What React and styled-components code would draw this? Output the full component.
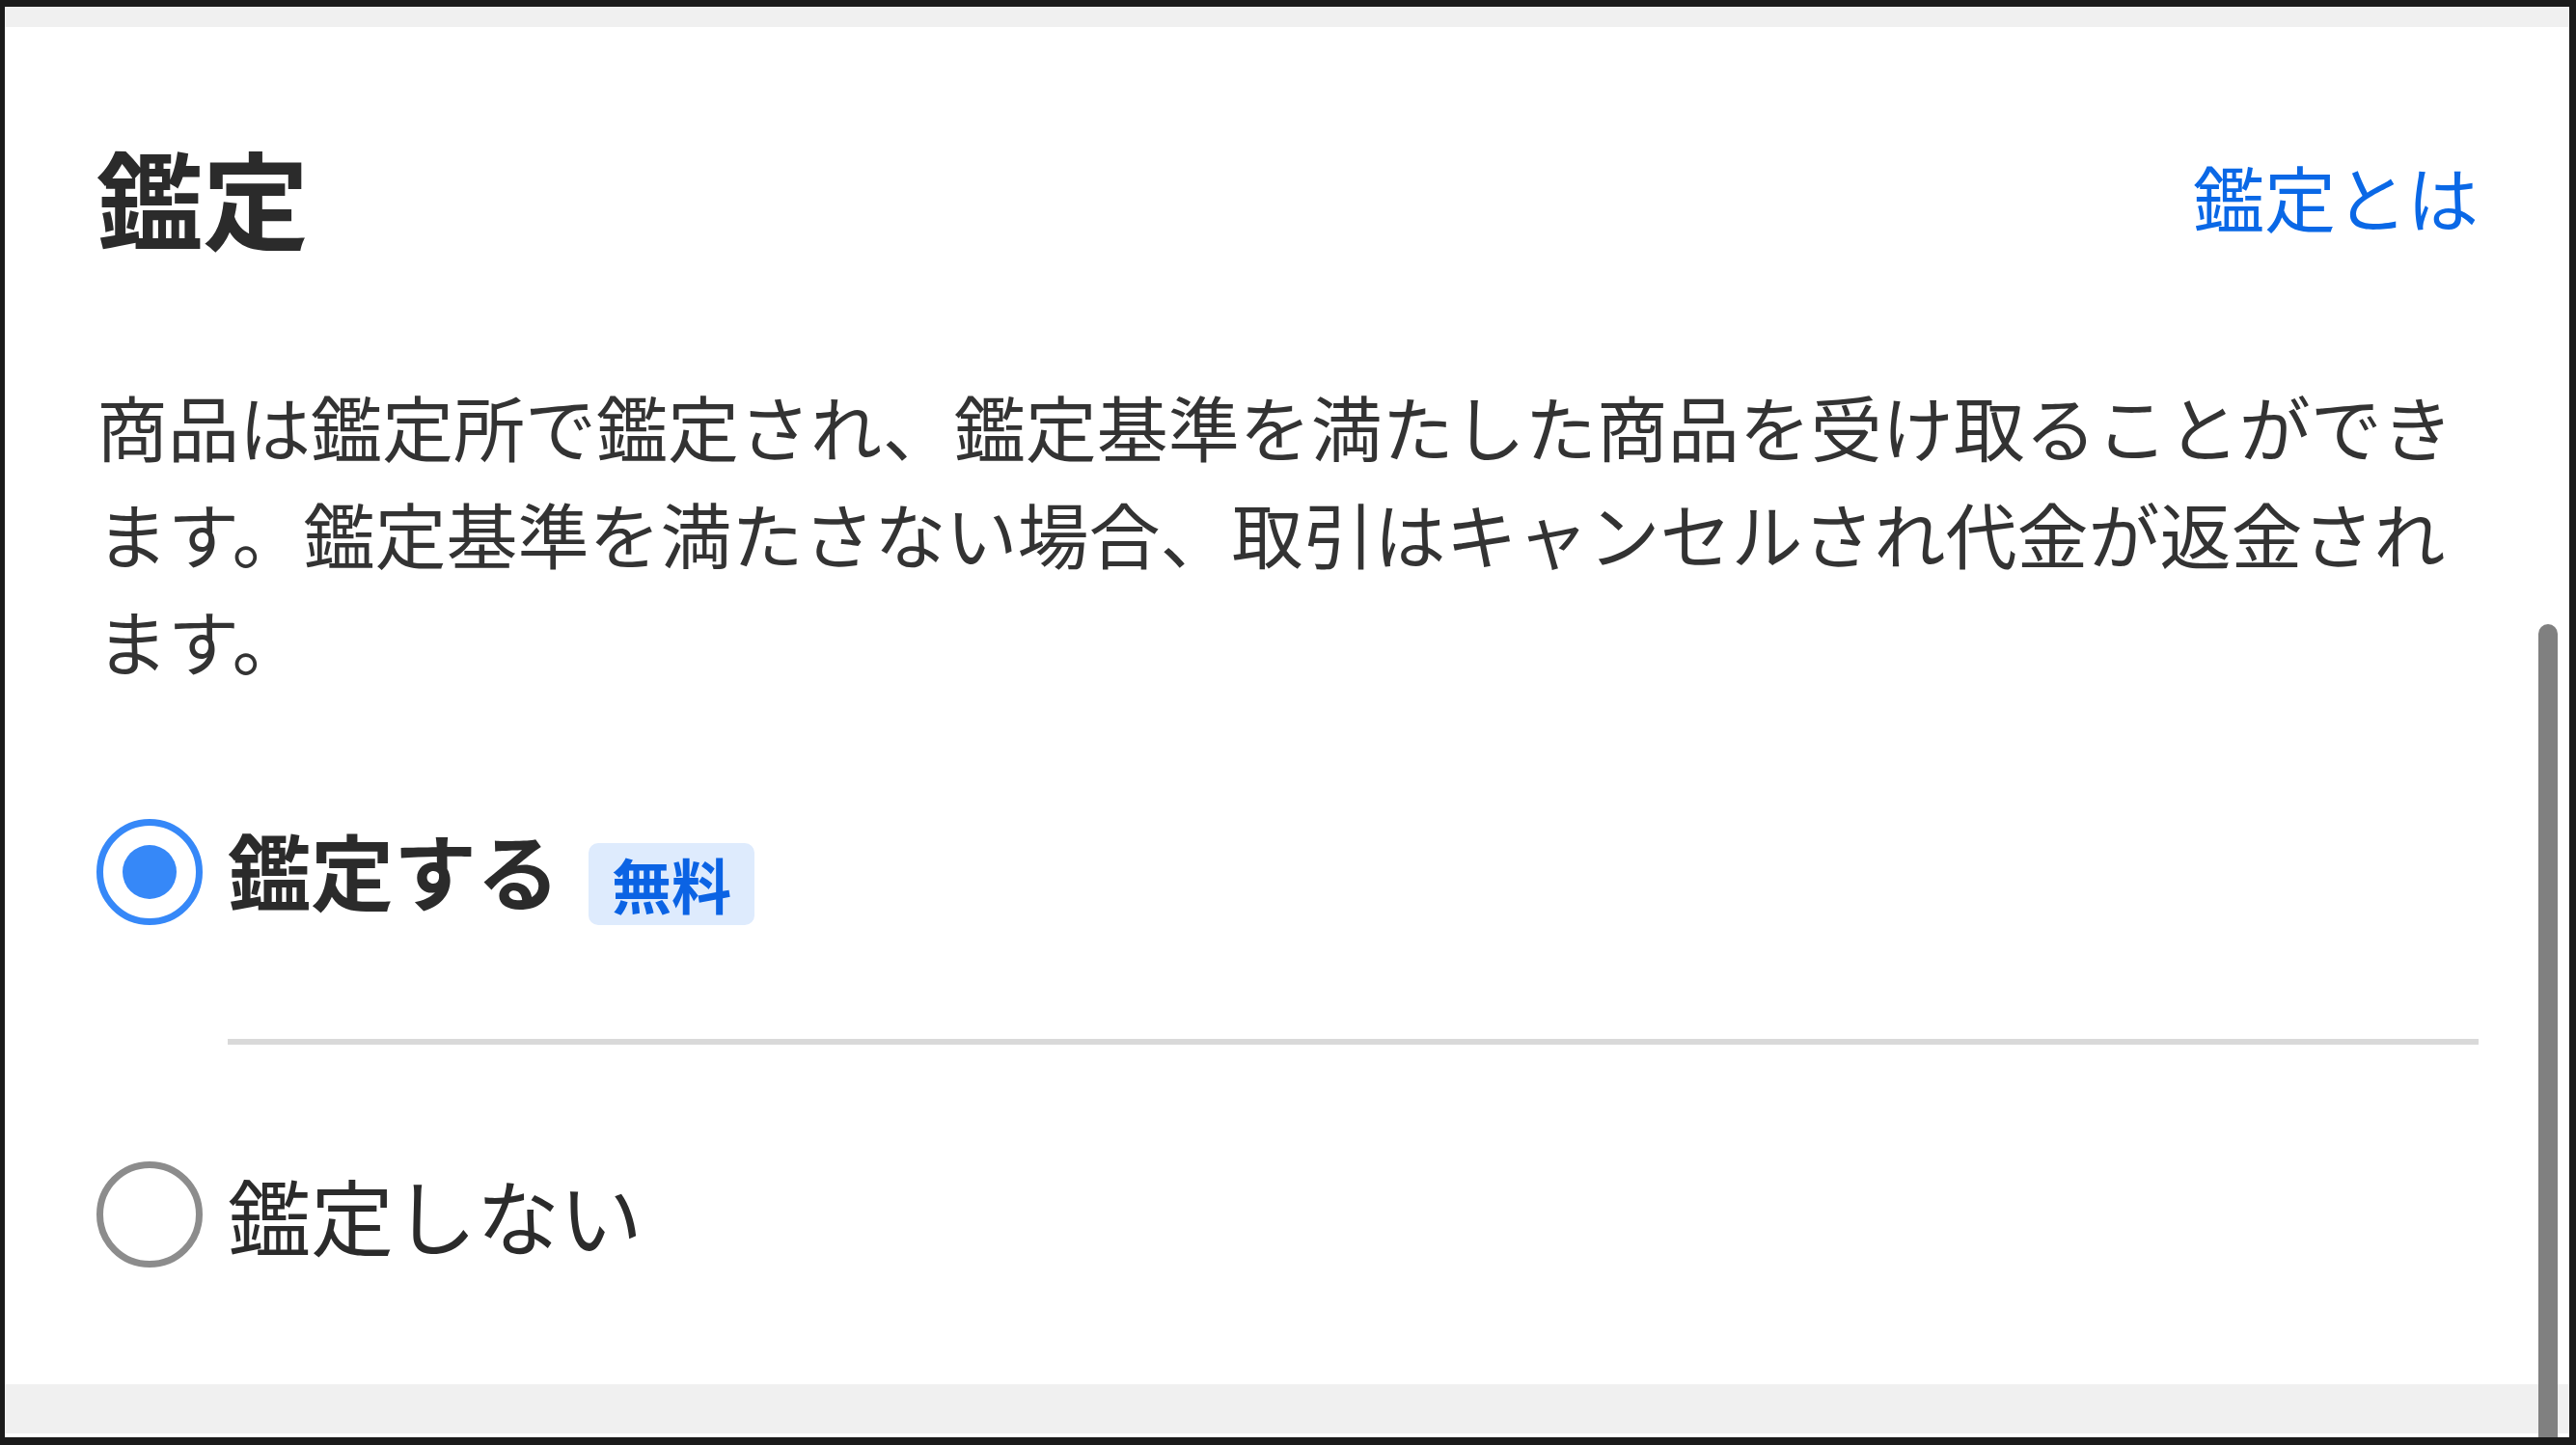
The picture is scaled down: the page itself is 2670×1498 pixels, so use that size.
import React, { useState } from 'react';
import styled, { createGlobalStyle } from 'styled-components';

const GlobalStyle = createGlobalStyle`
  html, body {
    margin: 0;
    padding: 0;
    background: #1b1b1b;
  }
  body {
    font-family: "Noto Sans CJK JP", "Noto Sans", sans-serif;
    color: #333333;
  }
`;

const Frame = styled.div`
  padding: 7px 7px 8px 5px;
  width: 2670px;
  height: 1498px;
  box-sizing: border-box;
`;

const Screen = styled.div`
  position: relative;
  height: 100%;
  display: flex;
  flex-direction: column;
  background: #ffffff;
  overflow: hidden;
`;

const GrayBand = styled.div`
  height: ${(p) => p.$h}px;
  background: #f0f0f0;
  flex-shrink: 0;
`;

const Section = styled.section`
  padding: 98px 94px 0 95px;
`;

const Header = styled.div`
  display: flex;
  justify-content: space-between;
  align-items: center;
  height: 154px;
`;

const Title = styled.h2`
  margin: 0;
  font-size: 110px;
  font-weight: 700;
  color: #2b2b2b;
  line-height: 1.4;
`;

const HelpLink = styled.a`
  font-size: 74px;
  color: #0a68e6;
  text-decoration: none;
  line-height: 1.4;
  cursor: pointer;
`;

const Description = styled.p`
  margin: 105px 0 0;
  font-size: 74px;
  line-height: 111px;
  color: #333333;
  padding-right: 6px;
`;

const Options = styled.div`
  display: flex;
  flex-direction: column;
  margin-top: 7px;
`;

const OptionRow = styled.label`
  display: flex;
  align-items: center;
  gap: 26px;
  cursor: pointer;
`;

const Radio = styled.span`
  width: 110px;
  height: 110px;
  flex-shrink: 0;
  box-sizing: border-box;
  border-radius: 50%;
  border: 7px solid ${(p) => (p.$checked ? '#3688f8' : '#8c8c8c')};
  display: flex;
  align-items: center;
  justify-content: center;

  &::after {
    content: '';
    width: 56px;
    height: 56px;
    border-radius: 50%;
    background: #3688f8;
    display: ${(p) => (p.$checked ? 'block' : 'none')};
  }
`;

const OptionBody = styled.div`
  flex: 1;
  display: flex;
  align-items: center;
  gap: 30px;
  padding: 116px 0;
  border-bottom: ${(p) => (p.$divider ? '6px solid #d9d9d9' : 'none')};
`;

const OptionLabel = styled.span`
  font-size: 86px;
  line-height: 120px;
  font-weight: ${(p) => (p.$bold ? 700 : 400)};
  color: #2b2b2b;
`;

const Badge = styled.span`
  display: inline-flex;
  align-items: center;
  height: 85px;
  margin-top: 30px;
  padding: 0 24px;
  border-radius: 10px;
  background: #deebfd;
  color: #0b63e4;
  font-size: 62px;
  font-weight: 700;
`;

const ScrollThumb = styled.div`
  position: absolute;
  right: 12px;
  top: 640px;
  bottom: 0;
  width: 20px;
  border-radius: 10px 10px 0 0;
  background: #808080;
`;

const options = [
  { id: 'yes', label: '鑑定する', free: true },
  { id: 'no', label: '鑑定しない' },
];

export default function App() {
  const [choice, setChoice] = useState('yes');

  return (
    <>
      <GlobalStyle />
      <Frame>
        <Screen>
          <GrayBand $h={21} />
          <Section>
            <Header>
              <Title>鑑定</Title>
              <HelpLink>鑑定とは</HelpLink>
            </Header>
            <Description>
              商品は鑑定所で鑑定され、鑑定基準を満たした商品を受け取ることができます。鑑定基準を満たさない場合、取引はキャンセルされ代金が返金されます。
            </Description>
            <Options>
              {options.map((o, i) => (
                <OptionRow key={o.id} onClick={() => setChoice(o.id)}>
                  <Radio $checked={choice === o.id} />
                  <OptionBody $divider={i < options.length - 1}>
                    <OptionLabel $bold={choice === o.id}>{o.label}</OptionLabel>
                    {o.free && <Badge>無料</Badge>}
                  </OptionBody>
                </OptionRow>
              ))}
            </Options>
          </Section>
          <GrayBand $h={51} />
          <ScrollThumb />
        </Screen>
      </Frame>
    </>
  );
}
